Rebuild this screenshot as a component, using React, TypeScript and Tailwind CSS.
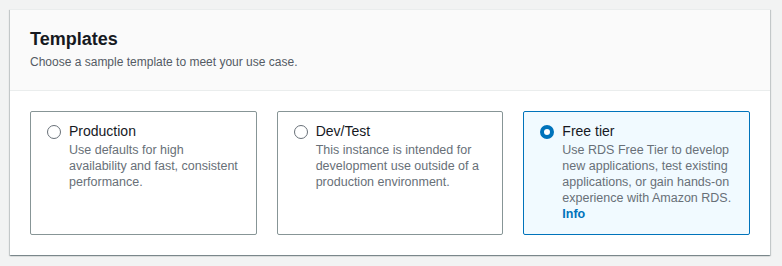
import React from 'react';

type Tile = {
  title: string;
  description: string;
  selected?: boolean;
  info?: boolean;
};

const tiles: Tile[] = [
  { title: 'Production', description: 'Use defaults for high availability and fast, consistent performance.' },
  { title: 'Dev/Test', description: 'This instance is intended for development use outside of a production environment.' },
  {
    title: 'Free tier',
    description: 'Use RDS Free Tier to develop new applications, test existing applications, or gain hands-on experience with Amazon RDS.',
    selected: true,
    info: true,
  },
];

function Radio({ checked }: { checked?: boolean }) {
  if (checked) {
    return <span className="mt-[4px] block w-[14px] h-[14px] shrink-0 rounded-full border-[4px] border-[#0073bb] bg-white" />;
  }
  return <span className="mt-[4px] block w-[14px] h-[14px] shrink-0 rounded-full border-[1.5px] border-[#687078] bg-white" />;
}

export default function App() {
  return (
    <div className="min-h-[266px] bg-[#f2f3f3] pt-[9px] pl-[10px] pr-[12px] font-['Liberation_Sans',Arial,sans-serif]">
      <div className="bg-white border-t border-[#eaeded] shadow-[0_1px_1px_0_rgba(0,28,36,0.3),1px_1px_1px_0_rgba(0,28,36,0.15),-1px_1px_1px_0_rgba(0,28,36,0.15)]">
        {/* header */}
        <div className="bg-[#fafafa] border-b border-[#eaeded] px-5 pt-[17px] pb-5">
          <h2 className="text-[18px] leading-[24px] font-bold text-[#16191f]">Templates</h2>
          <p className="mt-[3px] text-[12px] leading-[16px] text-[#545b64]">Choose a sample template to meet your use case.</p>
        </div>

        {/* options */}
        <div className="grid grid-cols-3 gap-5 p-5">
          {tiles.map((t) => (
            <label
              key={t.title}
              className={
                t.selected
                  ? 'flex gap-2 rounded-xs border border-[#0073bb] bg-[#f1faff] pl-4 pr-[14px] pt-[9px] pb-3 h-[124px]'
                  : 'flex gap-2 rounded-xs border border-[#879596] bg-white pl-4 pr-[14px] pt-[9px] pb-3 h-[124px]'
              }
            >
              <Radio checked={t.selected} />
              <div className="min-w-0">
                <div className="text-[14px] leading-[20px] text-[#16191f]">{t.title}</div>
                <div className="mt-px text-[12.5px] leading-[16px] text-[#687078]">
                  {t.description}
                  {t.info && <span className="block font-bold text-[#0073bb]">Info</span>}
                </div>
              </div>
            </label>
          ))}
        </div>
      </div>
    </div>
  );
}
